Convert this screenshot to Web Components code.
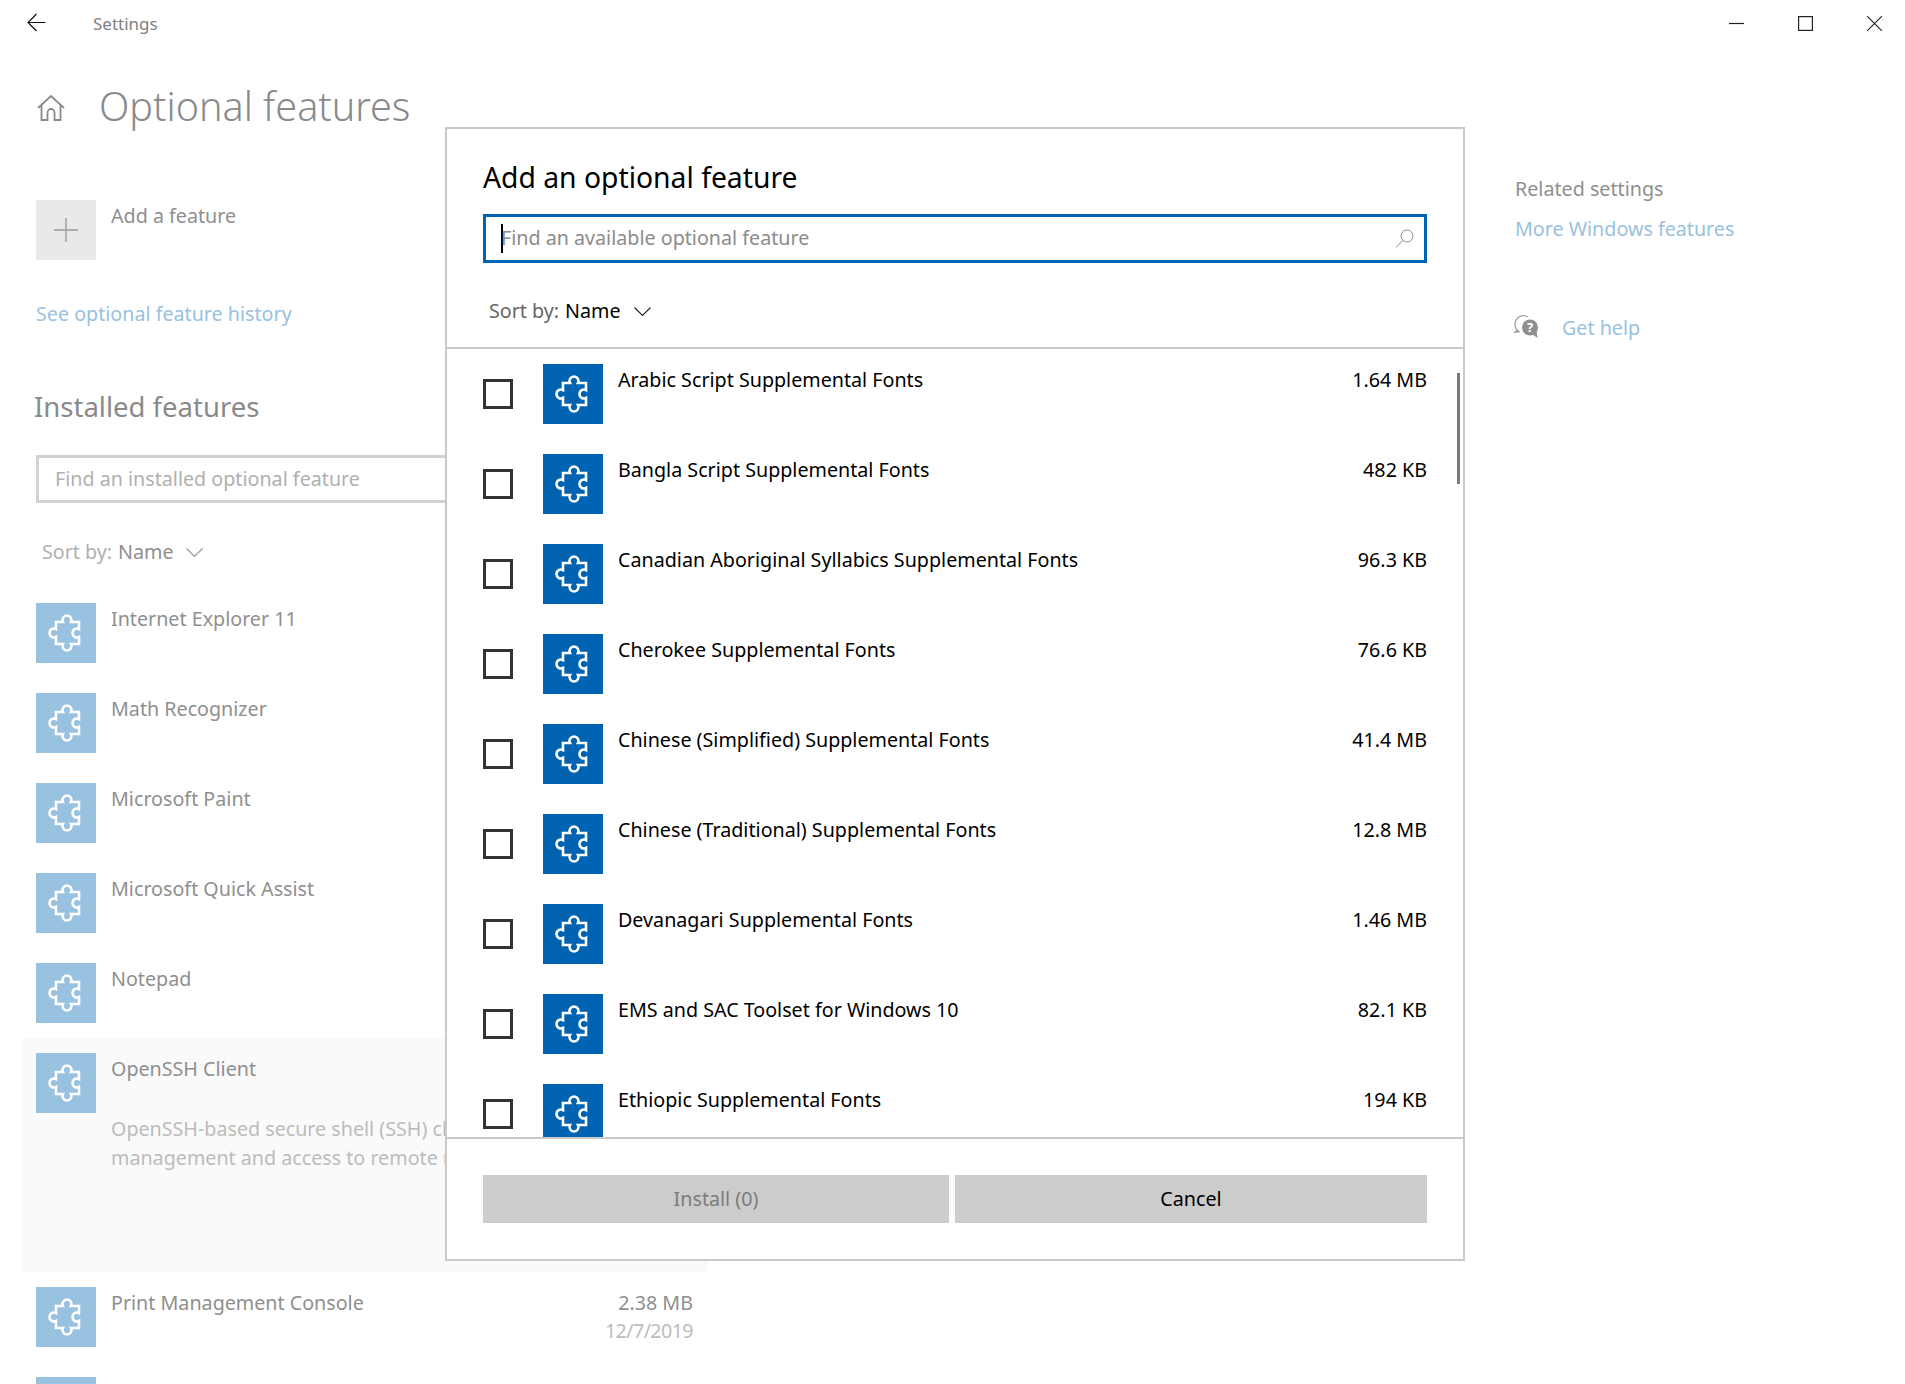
<!DOCTYPE html>
<html>
<head>
<meta charset="utf-8">
<title>Settings</title>
<style>
  html, body { margin: 0; height: 100%; background: #fff; }
  body { width: 1905px; height: 1384px; overflow: hidden; position: relative; font: 19.7px "Noto Sans", "Open Sans", sans-serif; }
</style>
</head>
<body>
<settings-window></settings-window>
<add-feature-dialog></add-feature-dialog>

<script>
const PUZZLE = `<svg viewBox="0 0 60 60" width="60" height="60"><path d="M20 19H27A4.5 4.5 0 1 1 35 19H43V26A4.5 4.5 0 1 0 43 34V41H35A4.5 4.5 0 1 1 27 41H20V34A4.5 4.5 0 1 1 20 26Z" fill="none" stroke="#fff" stroke-width="2.6"/></svg>`;

class FeatureTile extends HTMLElement {
  constructor() {
    super();
    this.attachShadow({ mode: 'open' });
    const bg = this.getAttribute('bg') || '#0063b1';
    this.shadowRoot.innerHTML = `
      <style>
        :host { display: block; width: 60px; height: 60px; flex: none; background: ${bg}; }
        svg { display: block; }
      </style>
      ${PUZZLE}
    `;
  }
}
customElements.define('feature-tile', FeatureTile);

class TitleBar extends HTMLElement {
  constructor() {
    super();
    this.attachShadow({ mode: 'open' });
    this.shadowRoot.innerHTML = `
      <style>
        :host { display: flex; align-items: center; height: 47px; color: #808080; font-size: 17px; }
        .back { margin-left: 27px; width: 19px; height: 19px; display: block; margin-top: -2px; }
        .name { margin-left: 47px; flex: 1; margin-top: -1px; }
        .ctl { display: block; width: 15px; height: 15px; margin-right: 54px; }
        .ctl:last-child { margin-right: 23px; }
      </style>
      <svg class="back" viewBox="0 0 19 19" fill="none" stroke="#111" stroke-width="1.2"><path d="M18.5 9.5H1M9.5 1L1 9.5 9.5 18"/></svg>
      <span class="name">Settings</span>
      <svg class="ctl" viewBox="0 0 15 15" fill="none" stroke="#222" stroke-width="1.2"><path d="M0 7.5H15"/></svg>
      <svg class="ctl" viewBox="0 0 15 15" fill="none" stroke="#222" stroke-width="1.2"><rect x=".6" y=".6" width="13.8" height="13.8"/></svg>
      <svg class="ctl" viewBox="0 0 15 15" fill="none" stroke="#222" stroke-width="1.1"><path d="M0 0L15 15M15 0L0 15"/></svg>
    `;
  }
}
customElements.define('title-bar', TitleBar);

class InstalledRow extends HTMLElement {
  constructor() {
    super();
    this.attachShadow({ mode: 'open' });
    this.shadowRoot.innerHTML = `
      <style>
        :host { display: flex; padding: 15px; gap: 15px; color: #8f8f8f; }
        :host([open]) { background: #fafafa; flex-wrap: wrap; height: 204px; align-content: flex-start; }
        .name { flex: 1; line-height: 28px; margin-top: 2px; white-space: nowrap; }
        .meta { text-align: right; line-height: 28px; margin-top: 2px; }
        .date { color: #bdbdbd; letter-spacing: -.6px; }
        .desc { color: #bcbcbc; line-height: 29px; margin: -14px 0 0 75px; width: 100%; white-space: nowrap; }
      </style>
      <feature-tile bg="#99c1e0"></feature-tile>
      <div class="name"><slot></slot></div>
      <div class="meta"><slot name="size"></slot><div class="date"><slot name="date"></slot></div></div>
      <div class="desc" hidden><slot name="desc"></slot></div>
    `;
    if (this.hasAttribute('open')) {
      this.shadowRoot.querySelector('.desc').hidden = false;
      this.shadowRoot.querySelector('.meta').remove();
    }
  }
}
customElements.define('installed-row', InstalledRow);

class SettingsWindow extends HTMLElement {
  constructor() {
    super();
    this.attachShadow({ mode: 'open' });
    const rows = ['Internet Explorer 11', 'Math Recognizer', 'Microsoft Paint', 'Microsoft Quick Assist', 'Notepad']
      .map((n) => `<installed-row>${n}</installed-row>`).join('');
    this.shadowRoot.innerHTML = `
      <style>
        :host { display: block; height: 1384px; overflow: hidden; }
        .main { display: flex; }
        .left { width: 708px; flex: none; }
        .pad { padding-left: 36px; }
        .head { display: flex; align-items: center; height: 60px; margin-top: 31px; }
        .home { width: 28px; height: 26px; margin-left: 1px; }
        h1 { font-size: 39.5px; font-weight: 300; margin: -4px 0 0 34px; color: #8a8a8a; white-space: nowrap; }
        .add { display: flex; gap: 15px; margin-top: 62px; color: #8f8f8f; line-height: 28px; }
        .add > div:last-child { margin-top: 2px; }
        .add-tile { width: 60px; height: 60px; background: #e8e9ea; display: flex; align-items: center; justify-content: center; }
        .link { color: #99c1e0; line-height: 28px; }
        .history { margin-top: 40px; }
        h2 { font-size: 27.5px; font-weight: 400; line-height: 40px; margin: 59px 0 0 -2px; color: #8a8a8a; }
        .find { margin-top: 28px; height: 48px; width: 650px; box-sizing: border-box; border: 3px solid #d2d2d2; color: #b0b0b0; padding-left: 16px; line-height: 41px; white-space: nowrap; }
        .sort { margin: 35px 0 22px 6px; line-height: 28px; color: #b0b0b0; display: flex; align-items: center; }
        .sort b { font-weight: 400; color: #8f8f8f; margin-left: 6px; }
        .sort svg { margin-left: 12px; }
        .right { margin-left: 807px; padding-top: 128px; }
        .rel { color: #8f8f8f; line-height: 28px; }
        .more { margin-top: 12px; }
        .help { display: flex; align-items: center; margin-top: 71px; margin-left: -1px; }
        .help svg { margin-top: -5px; }
        .help .link { margin-left: 24px; }
      </style>
      <title-bar></title-bar>
      <div class="main">
        <div class="left">
          <div class="pad">
            <div class="head">
              <svg class="home" viewBox="0 0 28 26" fill="none" stroke="#8a8a8a" stroke-width="1.8"><path d="M1 13L14 1 27 13M4.5 10V25H10.5V17.5A3.5 3.5 0 0 1 17.5 17.5V25H23.5V10"/></svg>
              <h1>Optional features</h1>
            </div>
            <div class="add">
              <div class="add-tile"><svg width="24" height="24" viewBox="0 0 24 24" stroke="#9a9a9a" stroke-width="1.4"><path d="M12 0V24M0 12H24"/></svg></div>
              <div>Add a feature</div>
            </div>
            <div class="link history">See optional feature history</div>
            <h2>Installed features</h2>
            <div class="find">Find an installed optional feature</div>
            <div class="sort">Sort by:<b>Name</b><svg width="17" height="9" viewBox="0 0 17 9" fill="none" stroke="#9a9a9a" stroke-width="1.2"><path d="M.5.5L8.5 8.5 16.5.5"/></svg></div>
          </div>
          <div class="rows" style="margin-left:21px">
            ${rows}
            <installed-row open>OpenSSH Client<span slot="desc">OpenSSH-based secure shell (SSH) client, for secure key<br>management and access to remote machines.</span></installed-row>
            <installed-row>Print Management Console<span slot="size">2.38 MB</span><span slot="date">12/7/2019</span></installed-row>
            <installed-row>Quick Assist</installed-row>
          </div>
        </div>
        <div class="right">
          <div class="rel">Related settings</div>
          <div class="link more">More Windows features</div>
          <div class="help">
            <svg width="24" height="24" viewBox="0 0 24 24"><path d="M3.5 16L.8 18.5 5 17.6A7.6 7.6 0 1 1 14 3" fill="none" stroke="#a0a0a0" stroke-width="1.3"/><circle cx="16" cy="13.5" r="8" fill="#8f8f8f"/><path d="M18 20L23.5 24 22.5 17Z" fill="#8f8f8f"/><text x="16" y="18" font-size="13" font-weight="700" text-anchor="middle" fill="#fff" font-family="Noto Sans">?</text></svg>
            <span class="link">Get help</span>
          </div>
        </div>
      </div>
    `;
  }
}
customElements.define('settings-window', SettingsWindow);

class OptionRow extends HTMLElement {
  constructor() {
    super();
    this.attachShadow({ mode: 'open' });
    this.shadowRoot.innerHTML = `
      <style>
        :host { display: flex; height: 60px; margin-bottom: 30px; color: #000; }
        .check { width: 30px; height: 30px; box-sizing: border-box; border: 3px solid #333; margin: 15px 30px 0 0; flex: none; }
        .name { flex: 1; margin-left: 15px; line-height: 28px; margin-top: 2px; white-space: nowrap; }
        .size { line-height: 28px; margin-top: 2px; text-align: right; }
      </style>
      <div class="check"></div>
      <feature-tile></feature-tile>
      <div class="name"><slot></slot></div>
      <div class="size">${this.getAttribute('size')}</div>
    `;
  }
}
customElements.define('option-row', OptionRow);

class AddFeatureDialog extends HTMLElement {
  constructor() {
    super();
    this.attachShadow({ mode: 'open' });
    const items = [
      ['Arabic Script Supplemental Fonts', '1.64 MB'],
      ['Bangla Script Supplemental Fonts', '482 KB'],
      ['Canadian Aboriginal Syllabics Supplemental Fonts', '96.3 KB'],
      ['Cherokee Supplemental Fonts', '76.6 KB'],
      ['Chinese (Simplified) Supplemental Fonts', '41.4 MB'],
      ['Chinese (Traditional) Supplemental Fonts', '12.8 MB'],
      ['Devanagari Supplemental Fonts', '1.46 MB'],
      ['EMS and SAC Toolset for Windows 10', '82.1 KB'],
      ['Ethiopic Supplemental Fonts', '194 KB'],
    ].map(([n, s]) => `<option-row size="${s}">${n}</option-row>`).join('');
    this.shadowRoot.innerHTML = `
      <style>
        :host { position: absolute; left: 445px; top: 127px; width: 1020px; height: 1134px; box-sizing: border-box; border: 2px solid #c9c9c9; background: #fff; display: flex; flex-direction: column; color: #000; }
        h3 { font-size: 28.3px; font-weight: 400; line-height: 40px; margin: 28px 36px 0; white-space: nowrap; }
        .search { margin: 17px 36px 0; height: 49px; box-sizing: border-box; border: 3px solid #0063b1; display: flex; align-items: center; padding: 0 10px 0 15px; color: #8c8c8c; }
        .caret { width: 2px; height: 29px; background: #000; margin-right: -2px; flex: none; }
        .ph { flex: 1; white-space: nowrap; margin-top: -2px; }
        .sort { margin: 34px 42px 0; line-height: 28px; height: 50px; color: #666; display: flex; align-items: flex-start; }
        .sort b { font-weight: 400; color: #000; margin-left: 6px; }
        .sort svg { margin: 10px 0 0 13px; }
        .list { flex: 1; min-height: 0; overflow: hidden; border-top: 2px solid #c9c9c9; border-bottom: 2px solid #c9c9c9; padding: 15px 36px 0; position: relative; }
        .thumb { position: absolute; right: 3px; top: 24px; width: 3px; height: 111px; background: #7a7a7a; }
        .foot { display: flex; gap: 6px; padding: 36px; }
        .btn { height: 48px; background: #ccc; text-align: center; line-height: 48px; }
        .install { width: 466px; color: #7c7c7c; }
        .cancel { flex: 1; }
      </style>
      <h3>Add an optional feature</h3>
      <div class="search">
        <span class="caret"></span><span class="ph">Find an available optional feature</span>
        <svg width="19" height="19" viewBox="0 0 19 19" fill="none" stroke="#8c8c8c" stroke-width="1"><circle cx="12" cy="7" r="6"/><path d="M8 11.5L.7 18.5"/></svg>
      </div>
      <div class="sort">Sort by:<b>Name</b><svg width="17" height="9" viewBox="0 0 17 9" fill="none" stroke="#222" stroke-width="1.1"><path d="M.5.5L8.5 8.5 16.5.5"/></svg></div>
      <div class="list">${items}<div class="thumb"></div></div>
      <div class="foot">
        <div class="btn install">Install (0)</div>
        <div class="btn cancel">Cancel</div>
      </div>
    `;
  }
}
customElements.define('add-feature-dialog', AddFeatureDialog);
</script>
</body>
</html>
